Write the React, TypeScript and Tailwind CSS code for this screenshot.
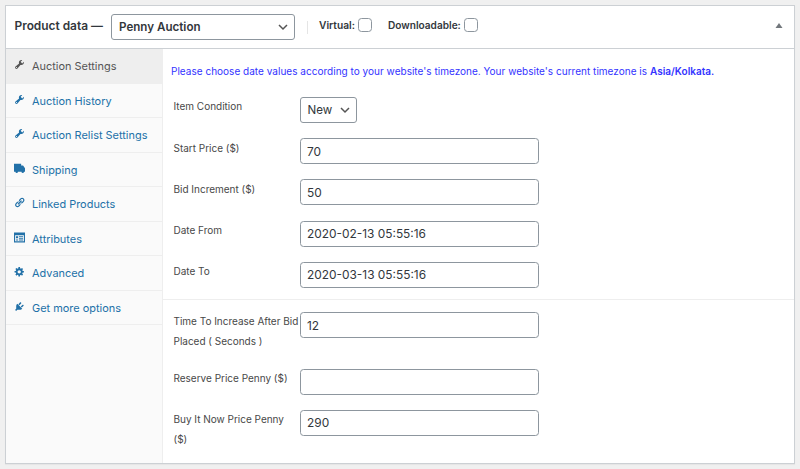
import React from "react";

const WRENCH =
  "M16.68 9.77c-1.34 1.34-3.3 1.67-4.95.99l-5.41 6.52c-.99.99-2.59.99-3.58 0s-.99-2.59 0-3.57l6.52-5.42c-.68-1.65-.35-3.61.99-4.95 1.28-1.28 3.12-1.62 4.72-1.06l-2.89 2.89 2.82 2.82 2.86-2.87c.53 1.58.18 3.39-1.08 4.65zM3.81 16.21c.4.39 1.04.39 1.43 0 .4-.4.4-1.04 0-1.43-.39-.4-1.03-.4-1.43 0-.39.39-.39 1.03 0 1.43z";
const LINK =
  "M17.74 2.76c1.68 1.69 1.68 4.41 0 6.1l-1.53 1.52c-1.12 1.12-2.7 1.47-4.14 1.09l2.62-2.61.76-.77.76-.76c.84-.84.84-2.2 0-3.04-.84-.85-2.2-.85-3.04 0l-.77.76-3.38 3.38c-.37-1.44-.02-3.02 1.1-4.14l1.52-1.53c1.69-1.68 4.42-1.68 6.1 0zM8.59 13.43l5.34-5.34c.42-.42.42-1.1 0-1.52-.44-.43-1.13-.39-1.53 0l-5.33 5.34c-.42.42-.42 1.1 0 1.52.44.43 1.13.39 1.52 0zm-.76 2.29l4.14-4.15c.38 1.44.03 3.02-1.09 4.14l-1.52 1.53c-1.69 1.68-4.41 1.68-6.1 0-1.68-1.68-1.68-4.42 0-6.1l1.53-1.52c1.12-1.12 2.7-1.47 4.14-1.1l-4.14 4.15c-.85.84-.85 2.2 0 3.05.84.84 2.2.84 3.04 0z";
const GEAR =
  "M18 12h-2.18c-.17.7-.44 1.35-.81 1.93l1.54 1.54-2.1 2.1-1.54-1.54c-.58.36-1.23.63-1.91.79V19H8v-2.18c-.68-.16-1.33-.43-1.91-.79l-1.54 1.54-2.12-2.12 1.54-1.54c-.36-.58-.63-1.23-.79-1.91H1V9.03h2.17c.16-.7.44-1.35.8-1.94L2.43 5.55l2.1-2.1 1.54 1.54c.58-.37 1.24-.64 1.93-.81V2h3v2.18c.68.16 1.33.43 1.91.79l1.54-1.54 2.12 2.12-1.54 1.54c.36.59.64 1.24.8 1.94H18V12zm-8.5 1.5c1.66 0 3-1.34 3-3s-1.34-3-3-3-3 1.34-3 3 1.34 3 3 3z";
const PLUG =
  "M13.11 4.36L9.87 7.6 8 5.73l3.24-3.24c.35-.34 1.05-.2 1.56.32.52.51.66 1.21.31 1.55zm-8 1.77l.91-1.12 9.01 9.01-1.19.84c-.71.71-2.63 1.16-3.82 1.16H6.14L4.9 17.26c-.59.59-1.54.59-2.12 0-.59-.58-.59-1.53 0-2.12l1.24-1.24v-3.88c0-1.13.4-3.19 1.09-3.89zm7.26 3.97l3.24-3.24c.34-.35 1.04-.21 1.55.31.52.51.66 1.21.31 1.55l-3.24 3.25z";
const TRUCK =
  "M0 1.500h13v3h3.500l3.500 5v6.500h-1.800a2.300 2.300 0 0 1-4.600 0H7.200a2.300 2.300 0 0 1-4.600 0H0z";
const CARD =
  "M0 1h20v18H0zM2 6v11h16V6zM3.500 7.500h4v4h-4zM9 7.500h7.500v1.800H9zM9 10.500h7.500v1.800H9zM3.500 13.500h4v2h-4zM9 13.500h7.500v2H9z";

const tabs = [
  { label: "Auction Settings", icon: WRENCH, active: true },
  { label: "Auction History", icon: WRENCH },
  { label: "Auction Relist Settings", icon: WRENCH },
  { label: "Shipping", icon: TRUCK },
  { label: "Linked Products", icon: LINK },
  { label: "Attributes", icon: CARD },
  { label: "Advanced", icon: GEAR },
  { label: "Get more options", icon: PLUG },
];

function Chevron() {
  return (
    <svg className="h-[10px] w-[10px] shrink-0" viewBox="0 0 10 10" fill="none" stroke="#555" strokeWidth="1.5">
      <path d="M1 3l4 4 4-4" />
    </svg>
  );
}

function Row({ label, height, children }: { label: React.ReactNode; height: string; children: React.ReactNode }) {
  return (
    <div className={`flex items-start ${height}`}>
      <label className="mt-[-0.600px] w-[126.500px] shrink-0 whitespace-nowrap text-[10px] leading-5 tracking-[-0.01px] text-[#484848]">
        {label}
      </label>
      {children}
    </div>
  );
}

function Field({ label, value, height = "h-[41.300px]" }: { label: React.ReactNode; value: string; height?: string }) {
  return (
    <Row label={label} height={height}>
      <input
        readOnly
        value={value}
        className="h-[26px] w-[239px] rounded-[3.500px] border border-[#8d969e] bg-white px-[6px] text-[11.900px] text-[#32373c] outline-none"
      />
    </Row>
  );
}

export default function App() {
  return (
    <div className="h-[469px] w-[800px] bg-[#f0f0f0] pl-[5px] pt-[5px] font-['Inter','Liberation_Sans',sans-serif]">
      <div className="flex h-[459px] w-[790px] flex-col border border-[#ccd0d4] bg-white shadow-[0_1px_1px_rgba(0,0,0,0.04)]">
        <header className="flex h-[43px] shrink-0 items-center border-b border-[#ccd0d4] pl-[8.500px] text-[#32373c]">
          <span className="w-[96.500px] whitespace-nowrap pb-[3px] text-[11.900px] font-semibold">Product data —</span>
          <div className="flex h-[26px] w-[184px] items-center justify-between rounded-[3px] border border-[#8d969e] pl-[7px] pr-[6px] text-[11.600px] font-semibold">
            <span className="pt-[2px]">Penny Auction</span>
            <Chevron />
          </div>
          <div className="ml-3 h-[13px] w-px bg-[#e5e5e5]" />
          <label className="ml-[11px] flex w-[69px] items-center whitespace-nowrap pb-[3px] text-[10.200px] font-semibold">
            <span className="w-[39px]">Virtual:</span>
            <span className="h-[14px] w-[14px] rounded-[3.500px] border border-[#8d969e]" />
          </label>
          <label className="flex items-center whitespace-nowrap pb-[3px] text-[10.100px] font-semibold">
            <span className="w-[76px]">Downloadable:</span>
            <span className="h-[14px] w-[14px] rounded-[3.500px] border border-[#8d969e]" />
          </label>
          <svg className="mb-[4px] ml-auto mr-[11px] h-[5px] w-[8px]" viewBox="0 0 8 5" fill="#72777c">
            <path d="M4 0l3.500 5h-7z" />
          </svg>
        </header>
        <div className="flex min-h-0 flex-1">
          <nav className="w-[157px] shrink-0 border-r border-[#eee] bg-[#fafafa]">
            {tabs.map((t) => (
              <div
                key={t.label}
                className={`flex h-[34.500px] items-center border-b border-[#eee] pl-2 ${
                  t.active ? "bg-[#eee] text-[#555]" : "text-[#2271a8]"
                }`}
              >
                <svg className="mb-[2px] mr-[7px] h-[11px] w-[11px] shrink-0" viewBox="0 0 20 20" fill="currentColor" fillRule="evenodd">
                  <path d={t.icon} />
                </svg>
                <span className="whitespace-nowrap pt-[1px] text-[10.950px]">{t.label}</span>
              </div>
            ))}
          </nav>
          <main className="min-w-0 flex-1">
            <p className="h-[48px] whitespace-nowrap pl-2 pt-[14px] text-[10px] leading-4 tracking-[0.02px] text-[#3333ff]">
              Please choose date values according to your website's timezone. Your website's current timezone is{" "}
              <b className="font-semibold">Asia/Kolkata.</b>
            </p>
            <section className="h-[203px] border-b border-[#eee] pl-[10.500px]">
              <Row label="Item Condition" height="h-[41.200px]">
                <div className="flex h-[26px] w-[57px] items-center justify-between rounded-[3px] border border-[#8d969e] pl-[6.500px] pr-[6px] text-[11.600px] text-[#32373c]">
                  <span className="pt-[2px]">New</span>
                  <Chevron />
                </div>
              </Row>
              <Field label="Start Price ($)" value="70" height="h-[41.200px]" />
              <Field label="Bid Increment ($)" value="50" height="h-[41.200px]" />
              <Field label="Date From" value="2020-02-13 05:55:16" height="h-[41.200px]" />
              <Field label="Date To" value="2020-03-13 05:55:16" height="h-[41.200px]" />
            </section>
            <section className="pl-[10.500px] pt-[12px]">
              <Field label={<>Time To Increase After Bid<br />Placed ( Seconds )</>} value="12" height="h-[56.500px]" />
              <Field label="Reserve Price Penny ($)" value="" />
              <Field label={<>Buy It Now Price Penny<br />($)</>} value="290" />
            </section>
          </main>
        </div>
      </div>
    </div>
  );
}
